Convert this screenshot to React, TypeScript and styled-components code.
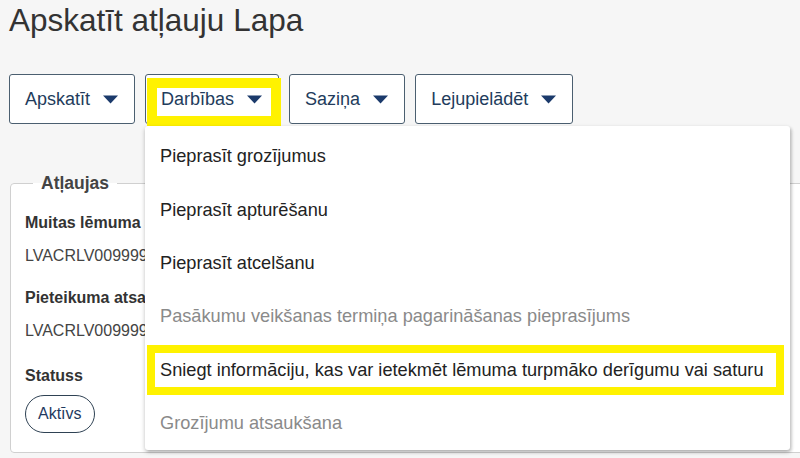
import styled, { createGlobalStyle } from 'styled-components';

const Global = createGlobalStyle`
  html, body {
    margin: 0;
    padding: 0;
    background: #f6f6f6;
    overflow: hidden;
  }
  body {
    font-family: "Liberation Sans", Arial, sans-serif;
  }
`;

const menuItems = [
  { label: 'Pieprasīt grozījumus' },
  { label: 'Pieprasīt apturēšanu' },
  { label: 'Pieprasīt atcelšanu' },
  { label: 'Pasākumu veikšanas termiņa pagarināšanas pieprasījums', disabled: true },
  { label: 'Sniegt informāciju, kas var ietekmēt lēmuma turpmāko derīgumu vai saturu', marked: true },
  { label: 'Grozījumu atsaukšana', disabled: true },
];

const fields = [
  { label: 'Muitas lēmuma atsauces numurs', value: 'LVACRLV0099999999999' },
  { label: 'Pieteikuma atsauces numurs', value: 'LVACRLV0099999999999' },
];

const Caret = () => (
  <CaretSvg viewBox="0 0 15 9" aria-hidden>
    <path d="M0 0.5h15L7.5 8.5z" fill="#1b3a6b" />
  </CaretSvg>
);

export default function App() {
  return (
    <Page>
      <Global />
      <Title>Apskatīt atļauju Lapa</Title>
      <Toolbar>
        <MenuButton>
          Apskatīt <Caret />
        </MenuButton>
        <ButtonWrap>
          <MenuButton marked>
            Darbības <Caret />
          </MenuButton>
          <Menu>
            {menuItems.map((item) => (
              <MenuItem key={item.label} disabled={item.disabled} marked={item.marked}>
                {item.label}
              </MenuItem>
            ))}
          </Menu>
        </ButtonWrap>
        <MenuButton>
          Saziņa <Caret />
        </MenuButton>
        <MenuButton>
          Lejupielādēt <Caret />
        </MenuButton>
      </Toolbar>
      <Section>
        <Fieldset>
          <Legend>Atļaujas</Legend>
          {fields.map((f) => (
            <Field key={f.label}>
              <Label>{f.label}</Label>
              <Value>{f.value}</Value>
            </Field>
          ))}
          <Field tight>
            <Label>Statuss</Label>
            <Pill>Aktīvs</Pill>
          </Field>
        </Fieldset>
      </Section>
    </Page>
  );
}

const Page = styled.div`
  width: 800px;
  height: 458px;
  overflow: hidden;
  padding: 0 0 0 9px;
  box-sizing: border-box;
`;

const Title = styled.h1`
  margin: 0;
  padding-top: 2px;
  font-size: 31.5px;
  line-height: 36px;
  font-weight: 400;
  color: #333;
`;

const Toolbar = styled.div`
  display: flex;
  gap: 10px;
  margin-top: 36px;
`;

const ButtonWrap = styled.div`
  position: relative;
  display: flex;
`;

const MenuButton = styled.button<{ marked?: boolean }>`
  position: relative;
  display: flex;
  align-items: center;
  gap: 13px;
  height: 50px;
  padding: 0 16px 0 15px;
  background: #fff;
  border: 1px solid #4b5f70;
  border-radius: 3px;
  font-family: "Liberation Sans", Arial, sans-serif;
  font-size: 18px;
  color: #223c5c;
  cursor: pointer;

  ${({ marked }) =>
    marked &&
    `
    &::after {
      content: '';
      position: absolute;
      top: 3px;
      left: 1px;
      right: -3px;
      bottom: -3px;
      border: 10px solid #fff200;
      pointer-events: none;
    }
  `}
`;

const CaretSvg = styled.svg`
  width: 15px;
  height: 9px;
`;

const Menu = styled.div`
  position: absolute;
  top: 52px;
  left: 0;
  z-index: 5;
  width: 645px;
  padding-top: 4px;
  background: #fff;
  border-radius: 3px;
  box-shadow: 0 2px 4px rgba(0, 0, 0, 0.25), 2px 2px 3px rgba(0, 0, 0, 0.12);
`;

const MenuItem = styled.div<{ disabled?: boolean; marked?: boolean }>`
  position: relative;
  display: flex;
  align-items: center;
  height: 53.4px;
  padding: 0 15px;
  font-size: 18.2px;
  color: ${({ disabled }) => (disabled ? '#8a8a8a' : '#222')};
  white-space: nowrap;

  ${({ marked }) =>
    marked &&
    `
    &::after {
      content: '';
      position: absolute;
      top: 1px;
      left: 2px;
      right: 6px;
      bottom: 2px;
      border: 8px solid #fff200;
      pointer-events: none;
    }
  `}
`;

const Section = styled.div`
  margin-top: 49px;
`;

const Fieldset = styled.fieldset`
  margin: 0 -40px 0 1px;
  padding: 20px 14px 0;
  background: #fff;
  border: 1px solid #d0d0d0;
  border-radius: 4px;
  height: 280px;
  box-sizing: border-box;
`;

const Legend = styled.legend`
  margin-left: 8px;
  padding: 0 8px;
  font-size: 17.5px;
  font-weight: 700;
  color: #444;
`;

const Field = styled.div<{ tight?: boolean }>`
  display: flex;
  flex-direction: column;
  align-items: flex-start;
  gap: ${({ tight }) => (tight ? '10px' : '15px')};
  padding-top: ${({ tight }) => (tight ? '3px' : '0')};
  margin-bottom: 24px;
`;

const Label = styled.div`
  font-size: 16px;
  line-height: 18px;
  font-weight: 700;
  color: #333;
`;

const Value = styled.div`
  font-size: 16px;
  line-height: 18px;
  color: #444;
`;

const Pill = styled.span`
  display: inline-flex;
  align-items: center;
  height: 38px;
  padding: 0 12px;
  border: 1.5px solid #2f4254;
  border-radius: 20px;
  box-sizing: border-box;
  font-size: 16px;
  color: #1f3a5f;
`;
